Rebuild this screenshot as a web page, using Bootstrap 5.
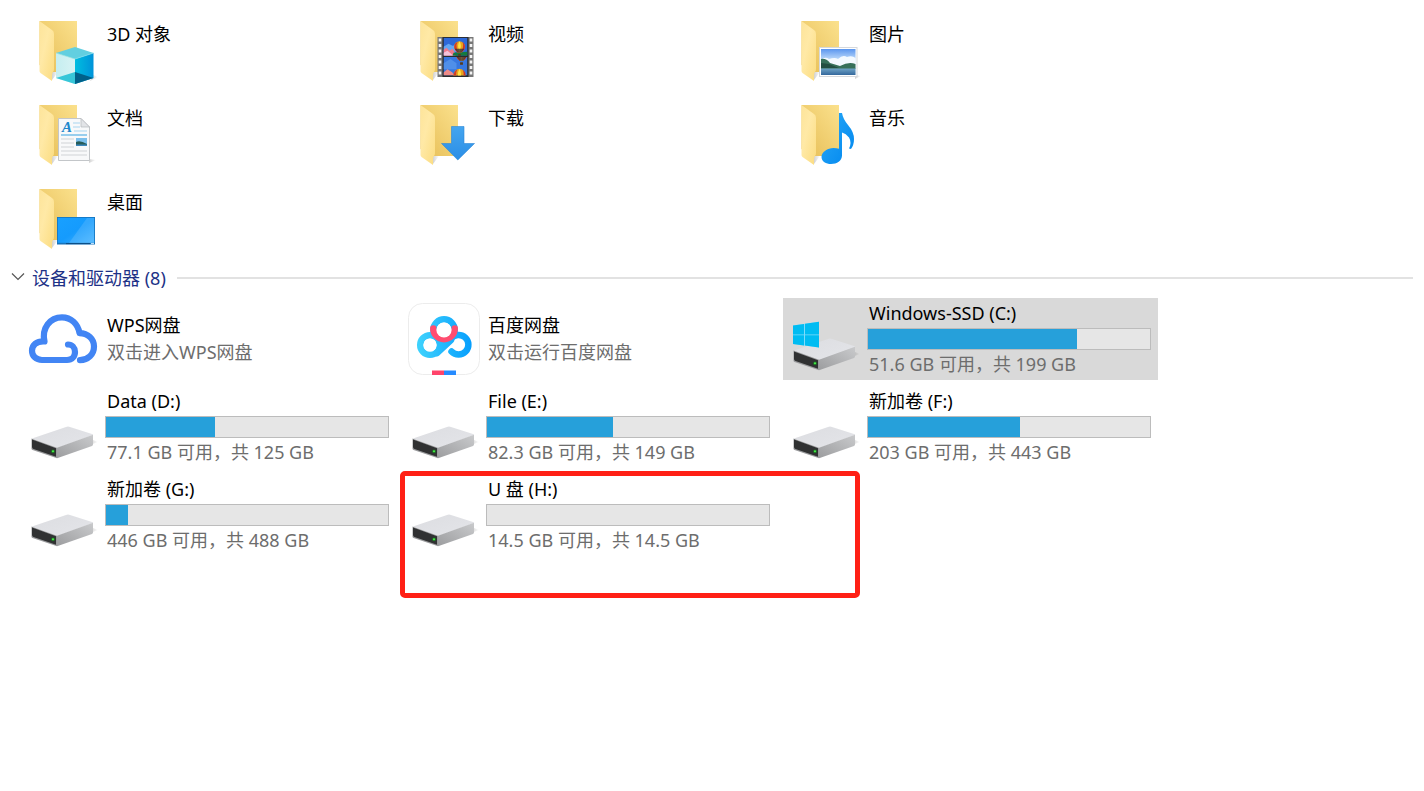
<!DOCTYPE html>
<html lang="zh-CN">
<head>
<meta charset="utf-8">
<meta name="viewport" content="width=device-width, initial-scale=1">
<title>此电脑</title>
<link href="https://cdn.jsdelivr.net/npm/bootstrap@5.3.0/dist/css/bootstrap.min.css" rel="stylesheet">
<style>
  body { font: 18px/24px "Noto Sans", "Noto Sans CJK SC", sans-serif; color: #000; background: #fff; padding-top: 12px; }
  .tiles { display: grid; grid-template-columns: repeat(auto-fill, 375px); gap: 6px; padding-left: 21px; }
  .tile { gap: 6px; padding-left: 6px; padding-right: 7px; color: #000; min-height: 82px; }
  .tile.folder { min-height: 78px; }
  .tile.selected { background: #d9d9d9; }
  .tile-icon { width: 72px; height: 72px; }
  .label-text { padding-left: 2px; }
  .folder .label-text { padding-top: 10px; }
  .sub { color: #6d6d6d; }
  .cloud-app { line-height: 27px; }
  .drive-info { padding-top: 3px; align-self: flex-start; }
  .capacity { height: 22px; margin: 3px 0 2px; border: 1px solid #bcbcbc; border-radius: 0; background: #e6e6e6; }
  .capacity .progress-bar { background: #26a0da; }
  .group-head { height: 40px; padding: 0 11px; gap: 11px; }
  .group-toggle { gap: 7px; color: #1e3287; border: 0; background: none; }
  .group-rule { height: 2px; background: #e2e2e2; }
  .highlight-box { left: -2px; top: -3px; width: 460px; height: 127px; border: 5px solid #ff2015; border-radius: 5px; pointer-events: none; }
  .doc-letter { font: italic bold 15px "Liberation Serif", serif; fill: #2187cb; }
</style>
</head>
<body class="min-vh-100">
<svg width="0" height="0" class="position-absolute" aria-hidden="true">
  <defs>
    <linearGradient id="gBack" x1="0" y1="1" x2="1" y2="0"><stop offset="0" stop-color="#e6bd55"/><stop offset="1" stop-color="#fbe18d"/></linearGradient>
    <linearGradient id="gFront" x1="0" y1="0" x2="1" y2="1"><stop offset="0" stop-color="#fde49a"/><stop offset=".4" stop-color="#ffe9a6"/><stop offset="1" stop-color="#fbdc80"/></linearGradient>
    <linearGradient id="gTop" x1="0" y1="0" x2="1" y2="1"><stop offset="0" stop-color="#dcdde1"/><stop offset="1" stop-color="#e4e5e9"/></linearGradient>
    <linearGradient id="gSide" x1="0" y1="1" x2="1" y2="0"><stop offset="0" stop-color="#9c9d9f"/><stop offset="1" stop-color="#c9cacc"/></linearGradient>
    <linearGradient id="gCubeL"><stop offset="0" stop-color="#c5eef0"/><stop offset="1" stop-color="#d8f3f4"/></linearGradient>
    <linearGradient id="gCubeR"><stop offset="0" stop-color="#00bde0"/><stop offset="1" stop-color="#0093d9"/></linearGradient>
    <linearGradient id="gNote" x1="0" y1="0" x2="1" y2="1"><stop offset="0" stop-color="#2aaaf8"/><stop offset="1" stop-color="#0086ee"/></linearGradient>
    <linearGradient id="gArrow" x1="0" y1="0" x2="0" y2="1"><stop offset="0" stop-color="#44a5ef"/><stop offset="1" stop-color="#2b8ee6"/></linearGradient>
    <linearGradient id="gSky" x1="0" y1="0" x2="0" y2="1"><stop offset="0" stop-color="#5a96ef"/><stop offset=".5" stop-color="#d5eafd"/><stop offset="1" stop-color="#e8f4ff"/></linearGradient>
    <linearGradient id="gSea" x1="0" y1="0" x2="0" y2="1"><stop offset="0" stop-color="#6fa3c6"/><stop offset="1" stop-color="#34689c"/></linearGradient>
    <linearGradient id="gDesk" x1="0" y1="0" x2="1" y2="1"><stop offset="0" stop-color="#18a0ff"/><stop offset=".5" stop-color="#159bfd"/><stop offset="1" stop-color="#43b3ff"/></linearGradient>
    <linearGradient id="gPan" gradientUnits="userSpaceOnUse" x1="9" y1="40" x2="63" y2="40"><stop offset="0" stop-color="#3fd3fd"/><stop offset="1" stop-color="#079ffd"/></linearGradient>
    <linearGradient id="gShadow"><stop offset="0" stop-color="#000" stop-opacity=".18"/><stop offset="1" stop-color="#000" stop-opacity="0"/></linearGradient>
    <symbol id="folder" viewBox="0 0 72 72">
      <path d="M25 57h6l-6 8z" fill="url(#gShadow)"/>
      <path d="M12.500 6h37.500v51H25L12.500 50z" fill="url(#gBack)"/>
      <path d="M12.500 6l12.500 9q2 1 2 4v35q0 2-1 3-1 1-1 4v5L13.500 58q-1-1-1-2z" fill="url(#gFront)"/>
    </symbol>
    <symbol id="drive" viewBox="0 0 72 72">
      <path d="M66 49l5 2-8 3z" fill="url(#gShadow)"/>
      <path d="M5 47.500L39 36q2-.8 4 0L65 43q1.500.5 1 1L30.500 57z" fill="url(#gTop)"/>
      <path d="M30 56.700L66 43.700V53.500q0 1-1 1.400L30 67.200z" fill="url(#gSide)"/>
      <path d="M4.500 47.500L30 56.700v10.500L5.500 59q-1-.5-1-1.500z" fill="#9a9b9d"/>
      <path d="M5 48.500l24 8.700v8.600L6.500 58q-1.500-.5-1.500-2z" fill="#303132"/>
      <circle cx="26" cy="60.300" r="1.900" fill="#1c7423"/><circle cx="26" cy="60.300" r="1" fill="#4cf04c"/>
    </symbol>
    <symbol id="balloon" viewBox="0 0 14 18">
      <path d="M1 7a6 6.500 0 0 1 12 0q0 3-4 6.500H5Q1 10 1 7z" fill="#e8a51c"/>
      <path d="M5 1.200Q3 4 4 9l1.500 4.500H5Q1 10 1 7q0-4 4-5.800z" fill="#d13b2a"/>
      <path d="M7 .5q2.500 4 1 8.500L7 13.500 6 9Q4.500 5 7 .5z" fill="#ffe04a"/>
      <path d="M10 1.500Q12 4 10.500 9L9 13.500q4-3.500 4-6.500 0-4-3-5.500z" fill="#c92f35"/>
      <path d="M1.500 9h11L9 13.500H5z" fill="#3a2a38" opacity=".75"/>
      <rect x="5.500" y="15" width="3" height="2.500" fill="#5b3a16"/>
    </symbol>
  </defs>
</svg>

<main>
  <section class="tiles" aria-label="文件夹">
    <a href="#" class="tile folder d-flex align-items-center text-decoration-none">
      <svg class="tile-icon flex-shrink-0" viewBox="0 0 72 72" aria-hidden="true"><use href="#folder"/>
        <path d="M66 60l5 2-8 4z" fill="url(#gShadow)"/>
        <path d="M48 32l18.500 6L48 44l-19-6z" fill="#62cfe0"/>
        <path d="M29 38l19 6v25l-19-6z" fill="url(#gCubeL)"/>
        <path d="M48 44l18.500-6v25L48 69z" fill="url(#gCubeR)"/>
        <path d="M29 63l19-6v12z" fill="#37c6d8"/><path d="M48 57l18.500 6L48 69z" fill="#00618a"/>
        <path d="M29 38l19 6 18.500-6" fill="none" stroke="#8be2ec" stroke-width=".7"/>
      </svg>
      <span class="label-text align-self-start">3D 对象</span>
    </a>
    <a href="#" class="tile folder d-flex align-items-center text-decoration-none">
      <svg class="tile-icon flex-shrink-0" viewBox="0 0 72 72" aria-hidden="true"><use href="#folder"/>
        <rect x="29.500" y="22" width="36" height="40" fill="#777"/>
        <path d="M32 23.500v38M63 23.500v38" stroke="#f4f4f4" stroke-width="2.600" stroke-dasharray="3 2.500"/>
        <rect x="34.500" y="22" width="26" height="40" fill="#2b2b2b"/>
        <svg x="35.500" y="22.700" width="24" height="18" viewBox="0 0 24 18" preserveAspectRatio="none">
          <rect width="24" height="18" fill="#2d68d8"/><path d="M0 9l5-3 4 2 5-1v7H0z" fill="#63a6f2"/>
          <path d="M0 12l3-2 3 3 3-2 3 5v2H0z" fill="#ef7a8c"/><path d="M0 15l4-2 6 5H0z" fill="#f4c2d8"/>
          <path d="M10 15l14-1v4H9z" fill="#157a3e"/><use href="#balloon" x="9" y="3" width="14" height="16"/>
        </svg>
        <svg x="35.500" y="42" width="24" height="18.500" viewBox="0 0 24 18" preserveAspectRatio="none">
          <rect width="24" height="18" fill="#3777df"/><path d="M0 6l7-4 6 4v6H0z" fill="#4f8fe9"/>
          <path d="M0 15l4-3 5 3 2 3H0z" fill="#ee8b88"/>
          <use href="#balloon" x="11" y="-9" width="14" height="17"/><use href="#balloon" x="9" y="11" width="14" height="18"/>
        </svg>
      </svg>
      <span class="label-text align-self-start">视频</span>
    </a>
    <a href="#" class="tile folder d-flex align-items-center text-decoration-none">
      <svg class="tile-icon flex-shrink-0" viewBox="0 0 72 72" aria-hidden="true"><use href="#folder"/>
        <path d="M66 60l6 1-6 3z" fill="url(#gShadow)"/>
        <rect x="30.500" y="32.500" width="37.500" height="29" fill="#fff" stroke="#d5d8dc"/>
        <rect x="32" y="34" width="34.500" height="26" fill="url(#gSky)"/>
        <path d="M32 45q4-4 8-1 6-2 9 0 5-5 9-2 5-2 8.500 1v8H32z" fill="#f3f9ff"/>
        <path d="M32 44q5-1 9 4l10 3q9-5 15.500-2v5H32z" fill="#37705a"/><path d="M32 48l8 1 10 4H32z" fill="#234f42"/>
        <rect x="32" y="53.500" width="34.500" height="6.500" fill="url(#gSea)"/>
      </svg>
      <span class="label-text align-self-start">图片</span>
    </a>
    <a href="#" class="tile folder d-flex align-items-center text-decoration-none">
      <svg class="tile-icon flex-shrink-0" viewBox="0 0 72 72" aria-hidden="true"><use href="#folder"/>
        <path d="M62 60l7 1-7 3z" fill="url(#gShadow)"/>
        <path d="M31.500 19.500H54l8.500 8.500v33.500h-31z" fill="#f8f9fa" stroke="#c3c6c9"/>
        <path d="M54 19.500V28h8.500z" fill="#e2e4e7" stroke="#b6b9bc" stroke-width=".7"/>
        <text x="35" y="33" class="doc-letter">A</text>
        <path d="M46 24h7M46 28h7M47 32h13" stroke="#a8d5ef"/>
        <path d="M34 36h26" stroke="#79bfe8" stroke-width="1.500"/>
        <path d="M34 40h13M34 44h13M34 48h13M34 52h26M34 56h26" stroke="#d0d3d6"/>
        <rect x="49" y="39" width="11" height="8" fill="#7cc0ec"/><path d="M49 43q4-2 11 2v1H49z" fill="#265c59"/><path d="M49 45.500h11V47H49z" fill="#3d88bd"/>
      </svg>
      <span class="label-text align-self-start">文档</span>
    </a>
    <a href="#" class="tile folder d-flex align-items-center text-decoration-none">
      <svg class="tile-icon flex-shrink-0" viewBox="0 0 72 72" aria-hidden="true"><use href="#folder"/>
        <path d="M43.500 27.500h12.500v17h10.500L49.800 61 33.500 44.500h10z" fill="url(#gArrow)" stroke="#2b86d6" stroke-width=".6"/>
      </svg>
      <span class="label-text align-self-start">下载</span>
    </a>
    <a href="#" class="tile folder d-flex align-items-center text-decoration-none">
      <svg class="tile-icon flex-shrink-0" viewBox="0 0 72 72" aria-hidden="true"><use href="#folder"/>
        <path d="M50 14h3q1 6 6 12 6 7 6 14 0 6-3 10l-2-.5q3-6 0-11-3-4-7-5v23c0 5-5 8.500-11 8.500-5 0-9.500-2.500-9.500-7 0-5 6-9 12-9q3 0 5.500.8z" fill="url(#gNote)"/>
      </svg>
      <span class="label-text align-self-start">音乐</span>
    </a>
    <a href="#" class="tile folder d-flex align-items-center text-decoration-none">
      <svg class="tile-icon flex-shrink-0" viewBox="0 0 72 72" aria-hidden="true"><use href="#folder"/>
        <rect x="30" y="34" width="38" height="27.500" fill="#1673bb"/>
        <rect x="30.800" y="34.800" width="36.400" height="25" fill="url(#gDesk)"/>
        <path d="M60 35h7v25H42z" fill="#fff" opacity=".13"/>
        <path d="M39 60.600h24" stroke="#0a4b80"/><path d="M64 60.600h3" stroke="#cce8ff"/>
      </svg>
      <span class="label-text align-self-start">桌面</span>
    </a>
  </section>

  <div class="group-head d-flex align-items-center">
    <button type="button" class="group-toggle d-flex align-items-center p-0" aria-expanded="true">
      <svg width="14" height="14" viewBox="0 0 14 14" aria-hidden="true"><path d="M1 2.500l6 6 6-6" fill="none" stroke="#555" stroke-width="1.200"/></svg>
      <span>设备和驱动器 (8)</span>
    </button>
    <div class="group-rule flex-grow-1"></div>
  </div>

  <section class="tiles" aria-label="设备和驱动器">
    <a href="#" class="tile d-flex align-items-center text-decoration-none">
      <svg class="tile-icon flex-shrink-0" viewBox="0 0 72 72" aria-hidden="true">
        <g fill="none" stroke="#4285f4" stroke-width="6.200" stroke-linecap="round" stroke-linejoin="round">
          <path d="M41 41.500C45 41.500 48 44.500 48 49s-3 8-8 8H15C9 57 5 53 5 47.800 5 42 9.500 38 17.500 38.500 14.500 25 23 14.300 35 14.300c9 0 16 6.500 17.500 15.800C61 30.300 67 36 67 43.500 67 51.500 61 57 53 57.200"/>
        </g>
      </svg>
      <span class="label-text cloud-app d-flex flex-column"><span>WPS网盘</span><span class="sub">双击进入WPS网盘</span></span>
    </a>
    <a href="#" class="tile d-flex align-items-center text-decoration-none">
      <svg class="tile-icon flex-shrink-0" viewBox="0 0 72 72" aria-hidden="true">
        <rect x=".5" y=".5" width="71" height="71" rx="14" fill="#fff" stroke="#ececec"/>
        <g fill="none" stroke="url(#gPan)" stroke-width="6.500" stroke-linecap="round">
          <circle cx="36" cy="27" r="10.700"/><circle cx="22" cy="42" r="9.800"/>
          <path d="M43 37L29 50"/>
          <path d="M43 35.500A9.800 9.800 0 1 1 43.500 48.500"/>
        </g>
        <path d="M38 36l8 0-13 13-3-5z" fill="url(#gPan)"/>
        <path d="M25.300 25.500a10.700 10.700 0 0 0 21.400 0" fill="none" stroke="#ff4d70" stroke-width="6.500" stroke-linecap="round"/>
        <circle cx="36" cy="27" r="7.600" fill="#fff"/><circle cx="22" cy="42" r="6.600" fill="#fff"/>
        <path d="M24 67.500h12V72H24z" fill="#ff436a"/><path d="M36 67.500h12V72H36z" fill="#258bff"/>
      </svg>
      <span class="label-text cloud-app d-flex flex-column"><span>百度网盘</span><span class="sub">双击运行百度网盘</span></span>
    </a>
    <a href="#" class="tile selected d-flex align-items-center text-decoration-none" aria-current="true">
      <svg class="tile-icon flex-shrink-0" viewBox="0 0 72 72" aria-hidden="true"><use href="#drive"/>
        <path d="M4 22.500l26-3.700v25.600L4 41z" fill="#7edcfb"/>
        <path d="M4 22.500l11-1.600v10.600H4zM16 20.800l14-2v12.700H16zM4 32.300h11v10.100L4 41zM16 32.300h14v12.100l-14-1.900z" fill="#00bcf2"/>
      </svg>
      <span class="drive-info d-flex flex-column flex-grow-1"><span class="label-text">Windows-SSD (C:)</span>
        <span class="progress capacity" role="progressbar" aria-label="C: 已用空间" aria-valuenow="74" aria-valuemin="0" aria-valuemax="100"><span class="progress-bar" style="width:74.100%"></span></span>
        <span class="label-text sub">51.6 GB 可用，共 199 GB</span></span>
    </a>
    <a href="#" class="tile d-flex align-items-center text-decoration-none">
      <svg class="tile-icon flex-shrink-0" aria-hidden="true"><use href="#drive"/></svg>
      <span class="drive-info d-flex flex-column flex-grow-1"><span class="label-text">Data (D:)</span>
        <span class="progress capacity" role="progressbar" aria-label="D: 已用空间" aria-valuenow="39" aria-valuemin="0" aria-valuemax="100"><span class="progress-bar" style="width:38.700%"></span></span>
        <span class="label-text sub">77.1 GB 可用，共 125 GB</span></span>
    </a>
    <a href="#" class="tile d-flex align-items-center text-decoration-none">
      <svg class="tile-icon flex-shrink-0" aria-hidden="true"><use href="#drive"/></svg>
      <span class="drive-info d-flex flex-column flex-grow-1"><span class="label-text">File (E:)</span>
        <span class="progress capacity" role="progressbar" aria-label="E: 已用空间" aria-valuenow="45" aria-valuemin="0" aria-valuemax="100"><span class="progress-bar" style="width:44.700%"></span></span>
        <span class="label-text sub">82.3 GB 可用，共 149 GB</span></span>
    </a>
    <a href="#" class="tile d-flex align-items-center text-decoration-none">
      <svg class="tile-icon flex-shrink-0" aria-hidden="true"><use href="#drive"/></svg>
      <span class="drive-info d-flex flex-column flex-grow-1"><span class="label-text">新加卷 (F:)</span>
        <span class="progress capacity" role="progressbar" aria-label="F: 已用空间" aria-valuenow="54" aria-valuemin="0" aria-valuemax="100"><span class="progress-bar" style="width:54%"></span></span>
        <span class="label-text sub">203 GB 可用，共 443 GB</span></span>
    </a>
    <a href="#" class="tile d-flex align-items-center text-decoration-none">
      <svg class="tile-icon flex-shrink-0" aria-hidden="true"><use href="#drive"/></svg>
      <span class="drive-info d-flex flex-column flex-grow-1"><span class="label-text">新加卷 (G:)</span>
        <span class="progress capacity" role="progressbar" aria-label="G: 已用空间" aria-valuenow="8" aria-valuemin="0" aria-valuemax="100"><span class="progress-bar" style="width:7.800%"></span></span>
        <span class="label-text sub">446 GB 可用，共 488 GB</span></span>
    </a>
    <a href="#" class="tile position-relative d-flex align-items-center text-decoration-none">
      <svg class="tile-icon flex-shrink-0" aria-hidden="true"><use href="#drive"/></svg>
      <span class="drive-info d-flex flex-column flex-grow-1"><span class="label-text">U 盘 (H:)</span>
        <span class="progress capacity" role="progressbar" aria-label="H: 已用空间" aria-valuenow="0" aria-valuemin="0" aria-valuemax="100"><span class="progress-bar" style="width:0%"></span></span>
        <span class="label-text sub">14.5 GB 可用，共 14.5 GB</span></span>
      <span class="highlight-box position-absolute"></span>
    </a>
  </section>
</main>
<script src="https://cdn.jsdelivr.net/npm/bootstrap@5.3.0/dist/js/bootstrap.bundle.min.js"></script>
</body>
</html>
